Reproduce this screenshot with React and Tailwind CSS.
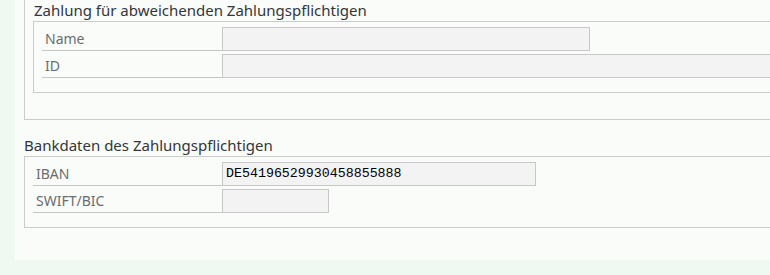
const Row = ({ label, labelWidth, inputWidth, value }) => (
  <div className="flex h-[24px] items-stretch">
    <div
      className="shrink-0 border-b border-[#c4c6c8] pl-[3px] text-[14px] leading-[23px] text-[#6a6d70]"
      style={{ width: labelWidth }}
    >
      {label}
    </div>
    <div
      className="shrink-0 border border-[#c8c8c8] bg-[#f3f3f3] pl-[3px] font-['Liberation_Mono',monospace] text-[13.3px] leading-[22px] text-black"
      style={{ width: inputWidth }}
    >
      {value}
    </div>
  </div>
);

const App = () => {
  return (
    <div className="h-[275px] w-[770px] overflow-hidden bg-[#eff8f1] font-['Noto_Sans',sans-serif]">
      <div className="ml-[15px] h-[260px] w-[800px] bg-[#fafcf9] pl-[9px]">
        {/* abweichender Zahlungspflichtiger */}
        <div className="border-b border-l border-[#cbcdcb] pb-[26px] pl-[8px]">
          <div className="h-[21px] pl-[1px] text-[15px] leading-[20px] text-[#32363a]">
            Zahlung für abweichenden Zahlungspflichtigen
          </div>
          <div className="flex flex-col gap-[3px] border-y border-l border-[#cbcdcb] pb-[14px] pl-[8px] pt-[5px]">
            <Row label="Name" labelWidth={180} inputWidth={368} />
            <Row label="ID" labelWidth={180} inputWidth={600} />
          </div>
        </div>

        {/* Bankdaten */}
        <div className="pt-[15px]">
          <div className="h-[21px] text-[15px] leading-[20px] text-[#32363a]">
            Bankdaten des Zahlungspflichtigen
          </div>
          <div className="flex flex-col gap-[3px] border-y border-l border-[#cbcdcb] pb-[14px] pl-[8px] pt-[5px]">
            <Row
              label="IBAN"
              labelWidth={189}
              inputWidth={314}
              value="DE54196529930458855888"
            />
            <Row label="SWIFT/BIC" labelWidth={189} inputWidth={107} />
          </div>
        </div>
      </div>
    </div>
  );
};

export default App;
